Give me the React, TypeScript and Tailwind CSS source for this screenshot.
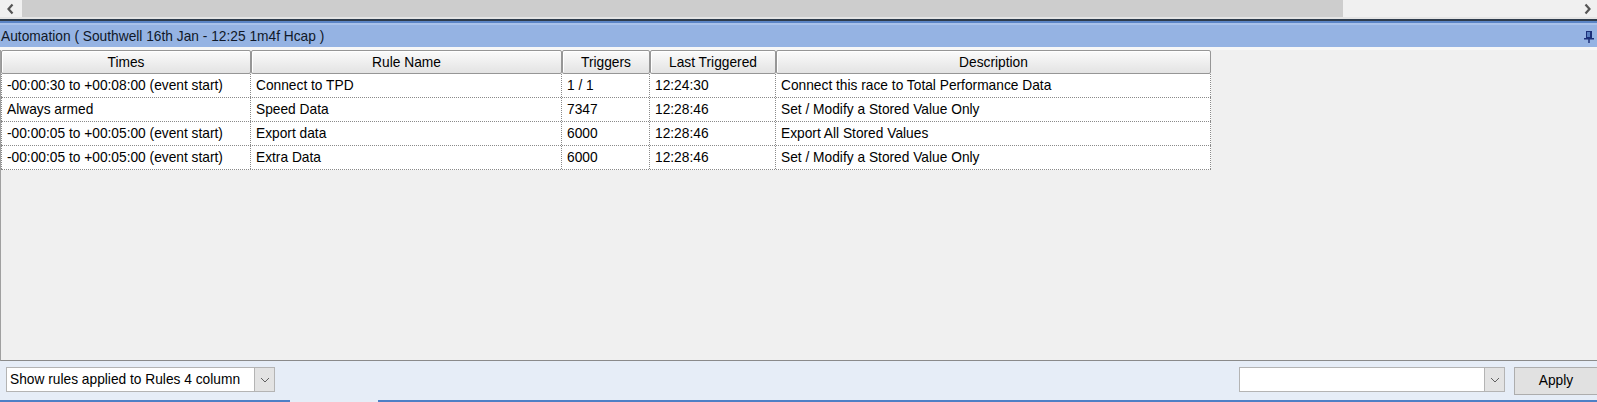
import React from "react";

const cols = [
  { label: "Times", w: 250 },
  { label: "Rule Name", w: 311 },
  { label: "Triggers", w: 88 },
  { label: "Last Triggered", w: 126 },
  { label: "Description", w: 435 },
];

const rows = [
  ["-00:00:30 to +00:08:00 (event start)", "Connect to TPD", "1 / 1", "12:24:30", "Connect this race to Total Performance Data"],
  ["Always armed", "Speed Data", "7347", "12:28:46", "Set / Modify a Stored Value Only"],
  ["-00:00:05 to +00:05:00 (event start)", "Export data", "6000", "12:28:46", "Export All Stored Values"],
  ["-00:00:05 to +00:05:00 (event start)", "Extra Data", "6000", "12:28:46", "Set / Modify a Stored Value Only"],
];

function Chevron({ dir }: { dir: "left" | "right" | "down" }) {
  if (dir === "down") {
    return (
      <svg width="10" height="6" viewBox="0 0 10 6">
        <path d="M1 1 L5 5 L9 1" fill="none" stroke="#606060" strokeWidth="1" />
      </svg>
    );
  }
  return (
    <svg width="9" height="12" viewBox="0 0 9 12">
      {dir === "left" ? (
        <path d="M6.5 1.5 L2.5 6 L6.5 10.5" fill="none" stroke="#555555" strokeWidth="2.2" />
      ) : (
        <path d="M2.5 1.5 L6.5 6 L2.5 10.5" fill="none" stroke="#555555" strokeWidth="2.2" />
      )}
    </svg>
  );
}

function Pin() {
  return (
    <svg width="10" height="12" viewBox="0 0 10 12">
      <rect x="2.5" y="0.5" width="5" height="6" fill="#5a7fc0" stroke="#1c2f78" strokeWidth="1" />
      <rect x="6" y="1" width="1" height="5" fill="#1c2f78" />
      <rect x="0" y="7" width="10" height="1.5" fill="#1c2f78" />
      <rect x="4.25" y="8" width="1.5" height="4" fill="#1c2f78" />
    </svg>
  );
}

export default function App() {
  return (
    <div className="w-[1597px] h-[402px] overflow-hidden flex flex-col bg-[#f0f0f0] font-['Liberation_Sans',Arial,sans-serif] text-[13.75px] leading-none text-black">
      {/* horizontal scrollbar */}
      <div className="h-[17px] flex items-stretch bg-[#f0f0f0]">
        <div className="w-[20px] flex items-center justify-center">
          <Chevron dir="left" />
        </div>
        <div className="flex-1 flex items-stretch pl-[2px] pr-[234px]">
          <div className="flex-1 bg-[#cdcdcd]" />
        </div>
        <div className="w-[20px] flex items-center justify-center">
          <Chevron dir="right" />
        </div>
      </div>
      <div className="h-[2px] bg-[#e4e4e4]" />
      <div className="h-[2px] bg-[#2e3c4c]" />
      <div className="h-[2px] bg-[#5b85c6]" />
      <div className="h-[2px] bg-[#a9c2ea]" />
      {/* title bar */}
      <div className="h-[22px] bg-[#95b3e3] flex items-center justify-between pl-[1px] pr-[3px] pt-[2px]">
        <span className="text-[#101828]">Automation ( Southwell 16th Jan - 12:25 1m4f Hcap )</span>
        <Pin />
      </div>
      <div className="h-[3px] bg-[#f7f7f7]" />
      {/* main panel */}
      <div className="flex-1 border-l border-[#a0a0a0] bg-[#f0f0f0] border-b border-b-[#8a8a8a]">
        <div className="w-[1210px]">
          <div className="flex h-[24px]">
            {cols.map((c) => (
              <div
                key={c.label}
                style={{ width: c.w }}
                className="shrink-0 flex items-center justify-center pt-[1px] border border-[#969696] rounded-[2px] bg-gradient-to-b from-[#fbfbfb] to-[#e3e3e3] shadow-[inset_1px_1px_0_#ffffff]"
              >
                {c.label}
              </div>
            ))}
          </div>
          {rows.map((r, i) => (
            <div key={i} className="flex h-[24px] bg-white border-b border-dotted border-[#8a8a8a]">
              {r.map((cell, j) => (
                <div
                  key={j}
                  style={{ width: cols[j].w }}
                  className={`shrink-0 flex items-center pl-[5px] border-r border-dotted border-[#8a8a8a] ${j === 0 ? "border-l" : ""}`}
                >
                  {cell}
                </div>
              ))}
            </div>
          ))}
        </div>
      </div>
      {/* bottom bar */}
      <div className="h-[39px] bg-[#e6edf7] flex items-start pt-[6px] pl-[6px]">
        <div className="w-[269px] h-[25px] flex bg-white border border-[#b4b4b4]">
          <div className="flex-1 flex items-center pl-[3px]">Show rules applied to Rules 4 column</div>
          <div className="w-[20px] bg-[#e3e3e3] border-l border-[#b4b4b4] flex items-center justify-center">
            <Chevron dir="down" />
          </div>
        </div>
        <div className="flex-1" />
        <div className="w-[266px] h-[25px] flex bg-white border border-[#b4b4b4]">
          <div className="flex-1" />
          <div className="w-[20px] bg-[#e3e3e3] border-l border-[#b4b4b4] flex items-center justify-center">
            <Chevron dir="down" />
          </div>
        </div>
        <div className="ml-[9px] -mr-[3px] w-[86px] shrink-0 h-[28px] bg-[#e1e1e1] border border-[#adadad] flex items-center justify-center pr-[2px]">
          Apply
        </div>
      </div>
      <div className="h-[2px] flex">
        <div className="w-[290px] bg-[#4d80c6]" />
        <div className="w-[88px] bg-[#e6edf7]" />
        <div className="flex-1 bg-[#4d80c6]" />
      </div>
    </div>
  );
}
